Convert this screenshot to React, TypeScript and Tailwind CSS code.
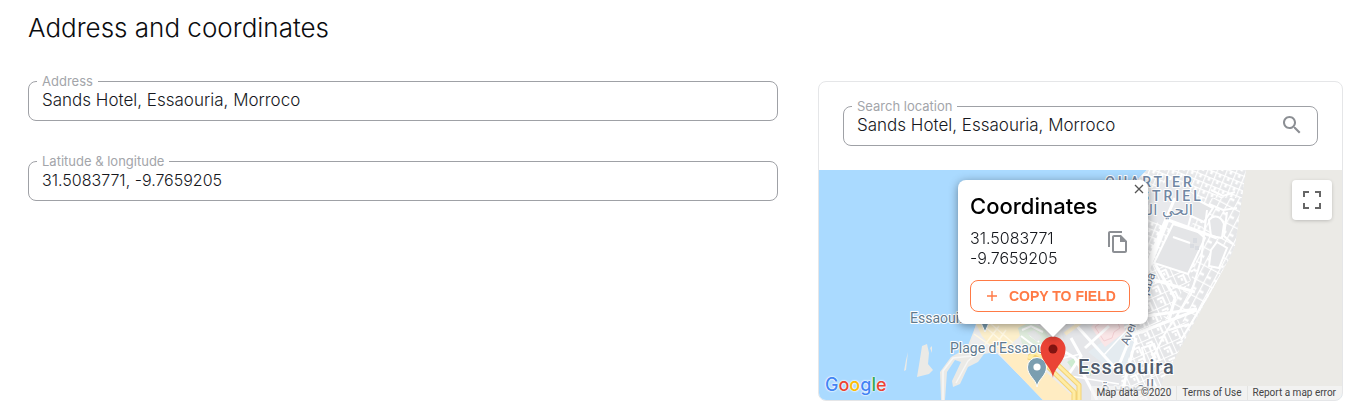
import { useState } from 'react';
import type { ReactNode } from 'react';
import clsx from 'clsx';

const ADDRESS = 'Sands Hotel, Essaouria, Morroco';
const COORDS = '31.5083771, -9.7659205';

type FieldProps = {
  id: string;
  label: string;
  value: string;
  onChange: (value: string) => void;
  numeric?: boolean;
  action?: ReactNode;
};

function OutlinedField({ id, label, value, onChange, numeric, action }: FieldProps) {
  return (
    <fieldset className="h-12 min-w-0 rounded-lg border border-[#9fa1a6] pl-2">
      <legend className="px-[5px] text-[13px] leading-4 text-[#a3a5aa]">
        <label htmlFor={id}>{label}</label>
      </legend>
      <div className="flex h-[22px] items-center">
        <input
          id={id}
          type="text"
          value={value}
          onChange={(e) => onChange(e.target.value)}
          className={clsx(
            'min-w-0 flex-1 bg-transparent pl-[5px] leading-[22px] font-light text-[#16181d] outline-none',
            numeric ? 'text-base' : 'text-[17px]',
          )}
        />
        {action}
      </div>
    </fieldset>
  );
}

function SearchIcon() {
  return (
    <svg viewBox="0 0 24 24" className="h-6 w-6 fill-[#8c8f94]">
      <path d="M15.5 14h-.79l-.28-.27C15.41 12.59 16 11.11 16 9.5 16 5.91 13.09 3 9.5 3S3 5.91 3 9.5 5.91 16 9.5 16c1.61 0 3.09-.59 4.23-1.57l.27.28v.79l5 4.99L20.49 19l-4.99-5zm-6 0C7.01 14 5 11.99 5 9.5S7.01 5 9.5 5 14 7.01 14 9.5 11.99 14 9.5 14z" />
    </svg>
  );
}

function CopyIcon() {
  return (
    <svg viewBox="0 0 24 24" className="h-6 w-6 fill-[#8c8f94]">
      <path d="M16 1H4c-1.1 0-2 .9-2 2v14h2V3h12V1zm-1 4H8c-1.1 0-1.99.9-1.99 2L6 21c0 1.1.89 2 1.99 2H19c1.1 0 2-.9 2-2V11l-6-6zM8 21V7h6v5h5v9H8z" />
    </svg>
  );
}

function MapDrawing() {
  return (
    <svg
      viewBox="0 0 523 230"
      preserveAspectRatio="xMinYMin slice"
      className="absolute inset-0 h-full w-full"
      aria-hidden="true"
    >
      <defs>
        <pattern id="blocksSmall" width="9" height="7" patternUnits="userSpaceOnUse" patternTransform="rotate(22)">
          <rect width="9" height="7" fill="#e6e7e9" />
          <path d="M0 0H9M0 0V7M5 0V4" stroke="#fff" strokeWidth="2.6" fill="none" />
        </pattern>
        <pattern id="blocksMid" width="14" height="12" patternUnits="userSpaceOnUse" patternTransform="rotate(-24)">
          <rect width="14" height="12" fill="#e5e6e8" />
          <path d="M0 0H14M0 0V12M4 4H10V12M7 6V9" stroke="#fff" strokeWidth="2.2" fill="none" />
        </pattern>
        <pattern id="blocksLong" width="16" height="8" patternUnits="userSpaceOnUse" patternTransform="rotate(-62)">
          <rect width="16" height="8" fill="#e5e6e8" />
          <path d="M0 0H16M0 0V8M8 0V5" stroke="#fff" strokeWidth="2.6" fill="none" />
        </pattern>
        <clipPath id="town">
          <path d="M328 0H427L416 76C414 84 408 92 405 98L344 210L338 230H240L200 160L300 80L320 8Z" />
        </clipPath>
      </defs>

      <rect width="523" height="230" fill="#aadaff" />

      {/* Mainland */}
      <path
        d="M328 0H523V230H224L194 199L177 182L165 184L159 192L149 197L141 214L134 217L133 211L142 192L136 190L128 202L126 230H122L121 202L132 187L148 178L157 155L240 110L318 10Z"
        fill="#ebeae6"
      />
      <path d="M124 230V201L134 188L153 186L165 178" fill="none" stroke="#f7f7f6" strokeWidth="1.6" />
      <path d="M137 213L149 191L165 178" fill="none" stroke="#f7f7f6" strokeWidth="1.4" />

      {/* Islets */}
      <path d="M103 176L108 174L110 183L109 194L114 200L110 204L98 207L100 195Z" fill="#ebeae6" />
      <path d="M89 182L87 200L85 201L87 190ZM111 178L113 176L113 183Z" fill="#ebeae6" />

      <g clipPath="url(#town)">
        <rect x="190" width="250" height="230" fill="#e8e9eb" />
        <path d="M318 0H428L416 76L405 98L390 126L318 90Z" fill="url(#blocksSmall)" />
        <path d="M318 82L412 90L378 150L300 172Z" fill="url(#blocksMid)" />
        <path d="M388 28H424L416 76L350 200L342 150L372 110L382 70Z" fill="url(#blocksLong)" />
        <path d="M312 162L352 148L372 154L336 230H296L306 196Z" fill="url(#blocksMid)" />

        {/* Industrial plots */}
        <path d="M329 20L352 10L373 23L383 36L369 62L330 50Z" fill="#e8e9ec" />
        <path d="M354 54L379 62L386 68L369 104L335 93Z" fill="#e4e5e7" stroke="#fff" strokeWidth="2" />
        <path d="M375 28L394 38L385 52L372 46L369 57" fill="#e4e5e7" stroke="#fff" strokeWidth="2" />
        <path d="M354 67L371 73" stroke="#fff" strokeWidth="2" />
        <path d="M374 68h4v5h-4zM371 74h4v4h-4zM376 76h4v4h-4z" fill="#d9dce1" />
        <path
          d="M390 50C395 44 402 46 405 54L403 68L392 66ZM392 80L398 72L408 78L400 98L390 96Z"
          fill="#e5e6e8"
          stroke="#fff"
          strokeWidth="2"
        />
        <path d="M392 20L404 26L416 22M390 34L404 40L418 38M408 42L405 66L414 74" fill="none" stroke="#fff" strokeWidth="2" />

        {/* Main streets */}
        <path d="M349 50L398 68M349 50L311 146M356 28L344 56L314 130" fill="none" stroke="#fff" strokeWidth="3" />
        <path
          d="M327 146L378 139M306 168L378 140M317 168L301 230M322 106L376 122M336 94L356 128L350 150"
          fill="none"
          stroke="#fff"
          strokeWidth="3"
        />
        <path
          d="M388 40L382 90L372 124L345 165L325 206M412 88L362 170M350 160L370 154M330 176L340 200L352 196"
          fill="none"
          stroke="#fff"
          strokeWidth="2"
        />
        <path d="M323 178l12 -4l6 16l-14 6zM318 204l18 -8" fill="none" stroke="#fff" strokeWidth="2" />
      </g>

      {/* Old town and port */}
      <path d="M158 150H240L262 170L278 230H224L194 199L177 182L150 180Z" fill="#ececed" />
      <path d="M157 154L212 150L199 168L183 181L170 174L163 166Z" fill="#fcefcb" />
      <path d="M163 154l25 22m-33 -12l20 14m-4 -25l23 20m-29 3l15 -20m-7 24l14 -20" stroke="#fff8e4" strokeWidth="1.5" />
      <path d="M199 158L211 152L226 160L232 172L221 184L203 174Z" fill="#deebdc" />
      <path d="M203 160L212 156L224 162M202 166L218 178L229 170M211 165L220 172" fill="none" stroke="#fff" strokeWidth="2" />
      <path d="M208 163l7 -3l8 7l-5 5z" fill="#e4e6e6" />
      <path d="M178 181L196 174L258 230H224L194 199Z" fill="#ffecc2" />

      <path d="M242 160L262 150L300 186L304 230H262L252 203Z" fill="#e5e6e9" />
      <path d="M269 182L300 160L315 172L307 196L299 205Z" fill="#e4ebf0" />
      <path d="M272 157L278 150H304L306 162L286 177Z" fill="#fae6e7" />
      <path d="M276 157l8 -6l4 3l10 -3l3 7l-6 4l-2 6l-8 3z" fill="none" stroke="#f3cfd3" strokeWidth="1" />
      <path d="M248 192l9 -5l5 6l-9 5zM266 196l6 4v6l-7 -4z" fill="#cdebd1" />
      <path
        d="M256 154L298 200M266 178L290 156M298 200L311 168M236 176L256 188L278 230M250 204L262 186L252 168"
        fill="none"
        stroke="#fff"
        strokeWidth="3"
      />
      <path d="M251 206L300 214M236 190L262 184M284 186L308 160" fill="none" stroke="#fff" strokeWidth="1.5" />
      <path d="M246 164l16 -12" stroke="#f8ecd0" strokeWidth="4" />

      {/* Coastal road */}
      <g fill="none" strokeLinejoin="round">
        <path d="M209 187L222 190L255 222V232M210 187L216 183L240 196L260 215V232" stroke="#f3d377" strokeWidth="5" />
        <path d="M209 187L222 190L255 222V232M210 187L216 183L240 196L260 215V232" stroke="#ffeca3" strokeWidth="3" />
      </g>

      {/* Place pins */}
      <path d="M160 148h12l-6 14z" fill="#7b9db0" stroke="#fff" strokeWidth="1" />
      <path
        d="M218 217C217 209 208.500 206 208.500 197A9.500 9.500 0 0 1 227.500 197C227.500 206 219 209 218 217Z"
        fill="#7b9eb0"
        stroke="#fff"
        strokeWidth="1"
      />
      <circle cx="218" cy="197" r="3.600" fill="#fff" />

      <g
        fontFamily="Roboto, sans-serif"
        stroke="#fff"
        strokeWidth="2"
        strokeLinejoin="round"
        style={{ paintOrder: 'stroke' }}
      >
        <g fontSize="14" fill="#5f7a8e">
          <text x="91" y="153">Essaoui...</text>
          <text x="131" y="183">Plage d'Essaouira</text>
        </g>
        <g fontSize="14" fontWeight="500" fill="#7187a3" textAnchor="middle" className="tracking-[3px]">
          <text x="331" y="17">QUARTIER</text>
          <text x="331" y="31">INDUSTRIEL</text>
        </g>
        <text x="330" y="45" fontSize="15" fill="#7187a3" textAnchor="middle" fontFamily="'DejaVu Sans', sans-serif">
          الحي الصناعي
        </text>
        <text x="0" y="0" fontSize="12" fill="#67758a" transform="translate(309 176) rotate(-69)">
          Avenue Aqaba
        </text>
        <text x="259" y="204" fontSize="20" fontWeight="500" fill="#515c6d" className="tracking-[1px]">
          Essaouira
        </text>
        <text x="309" y="221" fontSize="16" fill="#737d8b" textAnchor="middle" fontFamily="'DejaVu Sans', sans-serif">
          الصويرة
        </text>
      </g>

      {/* Selected location */}
      <path
        d="M234 208C233 197 221.500 192 221.500 179A12.500 12.500 0 0 1 246.500 179C246.500 192 235 197 234 208Z"
        fill="#ea4335"
      />
      <circle cx="234" cy="179" r="4.500" fill="#811411" />
    </svg>
  );
}

function CoordinatesPopup({ onCopy }: { onCopy: () => void }) {
  return (
    <div className="absolute top-[10px] left-[139px] w-[190px] drop-shadow-[0_2px_5px_rgba(0,0,0,0.4)]">
      <div className="rounded-lg bg-white pt-3 pr-[18px] pb-3 pl-3">
        <h2 className="text-[22px] leading-7 font-medium text-black">Coordinates</h2>
        <div className="mt-2 flex items-start justify-between">
          <p className="text-base leading-5 font-light text-[#16181d]">
            31.5083771
            <br />
            -9.7659205
          </p>
          <button type="button" aria-label="Copy coordinates" className="mt-0.5">
            <CopyIcon />
          </button>
        </div>
        <button
          type="button"
          onClick={onCopy}
          className="mt-3 flex h-8 w-full items-center rounded-lg border border-[#ff7a45] pl-4 font-['Liberation_Sans',Arial,sans-serif] text-sm font-bold whitespace-nowrap text-[#ff7a45]"
        >
          <svg viewBox="0 0 10 10" className="mr-3 h-[10px] w-[10px] stroke-[#ff7a45]" fill="none">
            <path d="M5 0V10M0 5H10" strokeWidth="1.4" />
          </svg>
          COPY TO FIELD
        </button>
      </div>
      <svg viewBox="0 0 26 13" className="mx-auto block h-[13px] w-[26px] fill-white">
        <path d="M0 0H26L13 13Z" />
      </svg>
      <button type="button" aria-label="Close" className="absolute top-1 right-1">
        <svg viewBox="0 0 10 10" className="h-[10px] w-[10px] stroke-[#555]" fill="none">
          <path d="M1 1L9 9M9 1L1 9" strokeWidth="1.300" />
        </svg>
      </button>
    </div>
  );
}

function GoogleLogo() {
  return (
    <a
      href="#google"
      className="absolute bottom-[3px] left-[6px] font-['Inter',sans-serif] text-[18px] leading-6 font-medium [text-shadow:0_0_2px_#fff,0_0_2px_#fff,0_0_1px_#fff]"
    >
      <span className="text-[#4285f4]">G</span>
      <span className="text-[#ea4335]">o</span>
      <span className="text-[#fbbc05]">o</span>
      <span className="text-[#4285f4]">g</span>
      <span className="text-[#34a853]">l</span>
      <span className="text-[#ea4335]">e</span>
    </a>
  );
}

export default function App() {
  const [address, setAddress] = useState(ADDRESS);
  const [coords, setCoords] = useState(COORDS);
  const [search, setSearch] = useState(ADDRESS);

  return (
    <main className="bg-white pt-3 pr-[21px] pb-4 pl-7 font-['Inter',sans-serif]">
      <h1 className="text-[26px] leading-8 font-light text-[#0b0c0f]">Address and coordinates</h1>

      <div className="mt-[29px] grid grid-cols-[10fr_7fr] items-start gap-10">
        <div className="flex flex-col gap-8">
          <OutlinedField id="address" label="Address" value={address} onChange={setAddress} />
          <OutlinedField id="coords" label="Latitude & longitude" value={coords} onChange={setCoords} numeric />
        </div>

        <section className="mt-2 overflow-hidden rounded-lg border border-[#e5e6e8]">
          <div className="px-6 pt-4 pb-6">
            <OutlinedField
              id="search"
              label="Search location"
              value={search}
              onChange={setSearch}
              action={
                <button type="button" aria-label="Search" className="mr-[13px]">
                  <SearchIcon />
                </button>
              }
            />
          </div>

          <div className="relative h-[230px] overflow-hidden">
            <MapDrawing />
            <CoordinatesPopup onCopy={() => setCoords(COORDS)} />

            <button
              type="button"
              aria-label="Toggle fullscreen view"
              className="absolute top-[10px] right-[10px] flex h-10 w-10 items-center justify-center rounded-sm bg-white shadow-[0_1px_4px_-1px_rgba(0,0,0,0.3)]"
            >
              <svg viewBox="0 0 18 18" className="h-[18px] w-[18px] fill-[#666]">
                <path d="M0 0v6h2V2h4V0H0zm16 0h-4v2h4v4h2V0h-2zm0 16h-4v2h6v-6h-2v4zM2 12H0v6h6v-2H2v-4z" />
              </svg>
            </button>

            <GoogleLogo />

            <div className="absolute right-0 bottom-0 flex h-[14px] divide-x divide-[#e4e4e2] bg-[#f5f5f5]/70 pr-px font-['Roboto',sans-serif] text-[10px] leading-[14px] text-[#444]">
              <span className="px-[5px]">Map data ©2020</span>
              <a href="#terms" className="px-[5px]">Terms of Use</a>
              <a href="#report" className="px-[5px]">Report a map error</a>
            </div>
          </div>
        </section>
      </div>
    </main>
  );
}
